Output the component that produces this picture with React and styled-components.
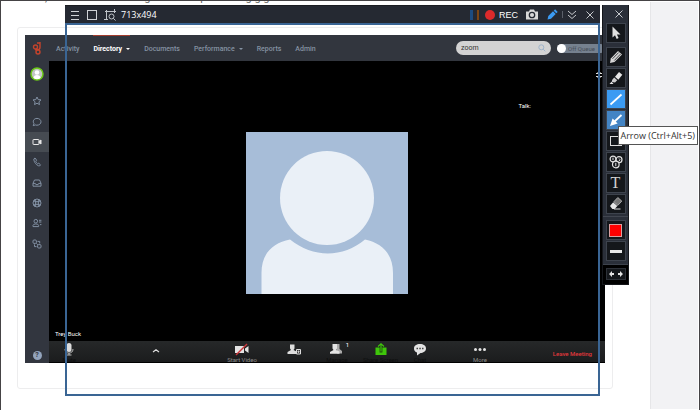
import React from "react"
import styled, { createGlobalStyle } from "styled-components"

const NAV = [
  { label: "Activity" },
  { label: "Directory", active: true, menu: true },
  { label: "Documents" },
  { label: "Performance", menu: true },
  { label: "Reports" },
  { label: "Admin" },
]

const SIDE = [
  {
    name: "Favorites",
    art: <path d="M5 1l1.200 2.600 2.800.3-2.100 1.900.6 2.800L5 7.200 2.500 8.600l.6-2.800L1 3.900l2.800-.3z" />,
  },
  {
    name: "Chat",
    art: <path d="M1.200 8.700l.8-2C.3 4.400 1.700 1.400 5 1.400c2.300 0 4 1.500 4 3.400S7.300 8.200 5 8.200c-.7 0-1.200-.1-1.700-.3z" />,
  },
  {
    name: "Video",
    active: true,
    art: (
      <>
        <rect x="1" y="2.500" width="6" height="5" rx=".5" />
        <path d="M7 4.500l2-1.500v4l-2-1.500z" fill="currentColor" />
      </>
    ),
  },
  {
    name: "Phone",
    art: <path d="M3 1L1.900 1.900c-.3 3 2.700 7 5.600 7.100L8.500 7.800 6.700 6.200l-.9.8C4.700 6.300 4 5.200 3.700 4.200l.9-1z" />,
  },
  {
    name: "Inbox",
    art: <path d="M1 5.300L2.500 2h5L9 5.300V8.200H1zM1 5.400h2.300l.6 1.200h2.200l.6-1.200H9" />,
  },
  {
    name: "Support",
    art: (
      <>
        <circle cx="5" cy="5" r="4" />
        <circle cx="5" cy="5" r="1.500" />
        <path d="M2.200 2.200L4 4M7.800 2.200L6 4M2.200 7.800L4 6M7.800 7.800L6 6" strokeWidth="1.800" />
      </>
    ),
  },
  {
    name: "Contacts",
    art: (
      <>
        <circle cx="3.800" cy="3.200" r="1.800" />
        <path d="M1 8.600V7.300c0-1.800 5.600-1.800 5.600 0v1.300zM7 2.300h2.400M7 4h2.400M8 6.600h1.400" />
      </>
    ),
  },
  {
    name: "Integrations",
    art: (
      <>
        <rect x="1" y="1" width="3.400" height="3.400" rx="1" />
        <rect x="5.600" y="5.600" width="3.400" height="3.400" rx="1" />
        <path d="M5.500 2.400h2.200v2M2.500 5.400v2.200h2M4.300 4.300l1.500 1.500" />
      </>
    ),
  },
]

const DRAW_TOOLS = [
  {
    name: "Pencil",
    art: (
      <>
        <path d="M2 14l.8-4.500L10 2l4 3.600L6.500 13z" fill="#d6d6d6" />
        <path d="M4.500 9.800l6.200-6.300M6.300 11.500l6.200-6.400" stroke="#17191d" strokeWidth=".8" />
      </>
    ),
  },
  {
    name: "Highlighter",
    art: (
      <>
        <path d="M7 6.800l4-4.800 3.300 2.800-4 5z" fill="#e6e6e6" />
        <path d="M6.200 7.600l3 2.700-2.200 2.200-3.200-.4.300-2z" fill="#cfcfcf" />
        <path d="M1.500 14l2-2.200 2 2.200z" fill="#e6e6e6" />
      </>
    ),
  },
  {
    name: "Line",
    tone: "#3b9bf3",
    art: <path d="M2.500 13.500L13.500 3.500" stroke="#fff" strokeWidth="1.700" />,
  },
  {
    name: "Arrow",
    tone: "#4384c4",
    tip: "Arrow (Ctrl+Alt+5)",
    art: (
      <>
        <path d="M13.500 3L6 10" stroke="#fff" strokeWidth="1.800" />
        <path d="M2 14l2.600-7.500 5 5z" fill="#fff" />
      </>
    ),
  },
  {
    name: "Rectangle",
    art: <rect x="2.500" y="3.500" width="11" height="9" stroke="#ddd" fill="none" />,
  },
  {
    name: "Numbering",
    art: (
      <g fill="#17191d" stroke="#e2e2e2" strokeWidth="1.200">
        <circle cx="11" cy="5.700" r="3" />
        <circle cx="5" cy="5" r="2.900" />
        <circle cx="7.800" cy="10.500" r="3.300" />
        <path d="M5 3.600v2.500M7.800 8.800v3.400M11 4.500l1 1.200-1 1.300" fill="none" strokeWidth="1" />
      </g>
    ),
  },
  { name: "Text", glyph: "T" },
  {
    name: "Eraser",
    art: (
      <>
        <path d="M2 10l3.200-3.700L9.300 10l-2.600 3H4.400z" fill="#e8e8e8" />
        <path d="M5.800 5.700L9.800 1.500l4 3.600L9.800 9.400z" fill="#777" stroke="#ccc" strokeWidth=".7" />
        <path d="M6 13h6.500" stroke="#ddd" />
      </>
    ),
  },
]

const CALL = [
  {
    name: "Mute",
    dim: true,
    offset: true,
    art: (
      <>
        <rect x="5.500" y="0" width="5" height="9" rx="2.500" fill="#ddd" />
        <path d="M4 6c0 5.500 8 5.500 8 0M8 10v2M5.500 12h5" stroke="#bbb" fill="none" />
      </>
    ),
  },
  { name: "", aria: "Audio options", art: <path d="M5 9L8 6.800 11 9" fill="none" stroke="#ddd" strokeWidth="1.200" /> },
  {
    name: "Start Video",
    art: (
      <>
        <path d="M1 3h9v7H1zM11 5.500L14.500 3v7L11 7.500z" fill="#e3e3e3" />
        <path d="M2 12L13 1" stroke="#c8363b" strokeWidth="1.400" />
      </>
    ),
  },
  {
    name: "",
    aria: "Invite",
    art: (
      <>
        <path d="M4 1.500h4.500v4l-1 1.500L10.500 8.500V11h-9V9L5 7 4 5.500z" fill="#ddd" />
        <path d="M10.500 6.500h4V11h-4z" fill="#333" stroke="#ddd" />
        <path d="M12.500 7.500v2.500M11.300 8.700h2.400" stroke="#ddd" strokeWidth=".8" />
      </>
    ),
  },
  {
    name: "Manage",
    dim: true,
    badge: "1",
    art: (
      <>
        <path d="M6.500 1h4v5L13 8v2.500H8z" fill="#aaa" />
        <path d="M3.500 1H8v4.500L7 7l3.500 1.500v2.300H1V9l3.500-2-1-1.500z" fill="#e3e3e3" />
      </>
    ),
  },
  {
    name: "Share Screen",
    dim: true,
    art: (
      <>
        <path d="M2.500 4.500h11v7.500h-11z" fill="#3fc60b" />
        <path d="M8 9.500V3.500" stroke="#1d4d0c" strokeWidth="2.800" />
        <path d="M8 8.500V1M5 3.500L8 .8l3 2.700" fill="none" stroke="#3fc60b" strokeWidth="1.100" />
      </>
    ),
  },
  {
    name: "Chat",
    dim: true,
    art: (
      <>
        <path d="M8 1c3.500 0 6 1.700 6 4.500S11 10 8.500 10L5 12.500V9.600C3.200 9 2 7.500 2 5.500 2 2.700 4.500 1 8 1z" fill="#e3e3e3" />
        <path d="M4.500 5.500h1.500M7.300 5.500h1.500M10 5.500h1.500" stroke="#444" strokeWidth="1.400" />
      </>
    ),
  },
  {
    name: "More",
    art: (
      <g fill="#e3e3e3">
        <circle cx="3.500" cy="6.500" r="1.500" />
        <circle cx="8" cy="6.500" r="1.500" />
        <circle cx="12.500" cy="6.500" r="1.500" />
      </g>
    ),
  },
]

export default function App() {
  return (
    <>
      <GlobalStyle />
      <Page>
        <Article>
          <Clipped aria-hidden="true">
            <span>,</span>
            <span>g</span>
            <span>p</span>
            <span>g g g</span>
          </Clipped>
          <Card>
            <MeetingApp />
          </Card>
        </Article>
        <Gutter />
        <Recorder />
      </Page>
    </>
  )
}

const MeetingApp = () => (
  <Shell>
    <Sidebar>
      <Logo viewBox="0 0 10 14" aria-label="Home">
        <circle cx="3.500" cy="6" r="2" />
        <circle cx="6" cy="11" r="2" />
        <path d="M8 1v5.500c0 1.600-1.500 2.300-3 2.300H3M5 2h3" />
      </Logo>
      <Profile aria-label="Profile">
        <svg viewBox="0 0 14 14" width="14" height="14">
          <circle cx="7" cy="7" r="6" fill="#c3c5c4" stroke="#6cc917" strokeWidth="1.500" />
          <circle cx="7" cy="5.500" r="2.300" fill="#fff" />
          <path d="M3.500 11c0-4 7-4 7 0-2 1.600-5 1.600-7 0z" fill="#fff" />
        </svg>
      </Profile>
      <SideList>
        {SIDE.map(item => (
          <SideButton key={item.name} aria-label={item.name} $active={item.active}>
            <svg viewBox="0 0 10 10" width="10" height="10">
              {item.art}
            </svg>
          </SideButton>
        ))}
      </SideList>
      <Help aria-label="Help">?</Help>
    </Sidebar>
    <Workspace>
      <Header>
        <Nav>
          {NAV.map(item => (
            <NavLink key={item.label} href="#" $active={item.active}>
              {item.label}
              {item.menu && <Caret />}
            </NavLink>
          ))}
        </Nav>
        <Search>
          <input aria-label="Search" defaultValue="zoom" />
          <svg viewBox="0 0 8 8" width="8" height="8">
            <circle cx="3.300" cy="3.300" r="2.500" />
            <path d="M5.200 5.200L7.300 7.300" />
          </svg>
        </Search>
        <Queue>
          <input type="checkbox" />
          Off Queue
        </Queue>
      </Header>
      <Stage>
        <StageTop>
          <Expand aria-label="Full screen">
            <svg viewBox="0 0 8 8" width="8" height="8">
              <path d="M1 2.500h2V1M5 1v1.500h2M1 5.500h2V7M5 7V5.500h2" />
            </svg>
          </Expand>
          <Talk>Talk:</Talk>
        </StageTop>
        <Avatar viewBox="0 0 162 162" role="img" aria-label="Participant">
          <rect width="162" height="162" fill="#a7bdd8" />
          <circle cx="81" cy="66" r="47" fill="#eaf0f7" />
          <path
            d="M15.500 162V141C15.500 121 27 111 44 107.500C67 126 97 126 119 107.500C136 111 147 122 147 141V162Z"
            fill="#eaf0f7"
          />
        </Avatar>
        <Speaker>Trey Buck</Speaker>
      </Stage>
      <CallBar>
        {CALL.map(item => (
          <CallButton key={item.name || item.aria} aria-label={item.aria} $offset={item.offset}>
            <svg viewBox="0 0 16 13" width="16" height="13">
              {item.art}
            </svg>
            {item.badge && <Badge>{item.badge}</Badge>}
            <CallLabel $dim={item.dim}>{item.name}</CallLabel>
          </CallButton>
        ))}
        <Leave>Leave Meeting</Leave>
      </CallBar>
    </Workspace>
  </Shell>
)

const Recorder = () => (
  <Overlay>
    <Capture>
      <Titlebar>
        <BarButton aria-label="Menu" $width={17}>
          <svg viewBox="0 0 10 10" width="10" height="10" stroke="#cfd2d6">
            <path d="M1 1.500h8M1 5.500h8M1 9.500h8" />
          </svg>
        </BarButton>
        <BarButton aria-label="Rectangle area" $width={18}>
          <svg viewBox="0 0 10 10" width="10" height="10" stroke="#cfd2d6">
            <rect x=".5" y=".5" width="9" height="9" fill="none" />
          </svg>
        </BarButton>
        <BarButton aria-label="Around mouse" $width={18}>
          <svg viewBox="0 0 12 12" width="12" height="12" stroke="#bfc3c8" fill="none">
            <path d="M2.500 1v9.500M1 2.500h8M10.500 0v4M8.500 2.500h3.500M0 10.500h4" />
            <circle cx="7.500" cy="7.500" r="2.500" />
            <path d="M9.300 9.300l2.200 2.200" />
          </svg>
        </BarButton>
        <Size>713x494</Size>
        <Pause aria-label="Pause">
          <svg viewBox="0 0 12 12" width="12" height="12">
            <rect x="1" y="1" width="3" height="10" fill="#1d4c80" />
            <rect x="8" y="1" width="2" height="10" fill="#7d4512" />
          </svg>
        </Pause>
        <Rec>
          <i />
          REC
        </Rec>
        <BarButton aria-label="Screenshot" $width={20}>
          <svg viewBox="0 0 12 11" width="12" height="11">
            <path d="M0 2.500h3L4 .5h4l1 2h3V10.500H0z" fill="#d8d8d8" />
            <circle cx="6" cy="6" r="2.700" fill="none" stroke="#252932" strokeWidth="1.300" />
          </svg>
        </BarButton>
        <BarButton aria-label="Draw" $width={20}>
          <svg viewBox="0 0 11 11" width="11" height="11">
            <path d="M.5 10.500l.8-3.500L6 2.300l2.700 2.700L4 9.700zM6.700 1.700L8.100.3l2.600 2.600-1.400 1.400z" fill="#3b9bf3" />
          </svg>
        </BarButton>
        <Rule />
        <BarButton aria-label="Collapse" $width={18}>
          <svg viewBox="0 0 10 10" width="10" height="10" stroke="#c5c8cc" fill="none">
            <path d="M1 1l4 3.500L9 1M1 5l4 3.500L9 5" />
          </svg>
        </BarButton>
        <BarButton aria-label="Close" $width={18}>
          <Cross />
        </BarButton>
      </Titlebar>
      <Frame />
    </Capture>
    <Palette>
      <PaletteClose aria-label="Close tools">
        <Cross />
      </PaletteClose>
      <Tool aria-label="Select">
        <svg viewBox="0 0 16 16" width="16" height="16">
          <path d="M4.500 1.500v11L7 10.300l1.700 3.700 1.900-.9-1.700-3.500h3.600z" fill="#e0e0e0" />
        </svg>
      </Tool>
      <Tools>
        {DRAW_TOOLS.map(tool => (
          <ToolSlot key={tool.name}>
            <Tool aria-label={tool.name} $tone={tool.tone}>
              {tool.glyph || (
                <svg viewBox="0 0 16 16" width="16" height="16" fill="none">
                  {tool.art}
                </svg>
              )}
            </Tool>
            {tool.tip && <Tip role="tooltip">{tool.tip}</Tip>}
          </ToolSlot>
        ))}
      </Tools>
      <Tools $ruled>
        <Tool aria-label="Color">
          <Swatch />
        </Tool>
        <Tool aria-label="Line width">
          <Stroke />
        </Tool>
      </Tools>
      <PaletteFoot>
        <Flip aria-label="Flip">
          <svg viewBox="0 0 16 8" width="16" height="8" fill="#e3e3e3">
            <path d="M1 4l3-3v2h2v2H4v2zM15 4l-3-3v2h-2v2h2v2z" />
          </svg>
        </Flip>
      </PaletteFoot>
    </Palette>
  </Overlay>
)

const Cross = () => (
  <svg viewBox="0 0 8 8" width="8" height="8" stroke="#c5c8cc">
    <path d="M.5.5l7 7M7.500.5l-7 7" />
  </svg>
)

const GlobalStyle = createGlobalStyle`
  * {
    box-sizing: border-box;
  }

  body {
    margin: 0;
    font-family: Roboto, sans-serif;
    font-size: 7px;
  }

  button,
  input {
    font: inherit;
    color: inherit;
    margin: 0;
    padding: 0;
    border: 0;
    background: none;
  }

  svg {
    display: block;
    flex: none;
  }
`

const Page = styled.div`
  position: relative;
  display: grid;
  grid-template-columns: 1fr 49px;
  min-height: 100vh;
  border: 1px solid #454345;
  background: #fff;
`

const Article = styled.main`
  padding: 0 37px 21px 16px;
`

/* last line of the scrolled-away paragraph, only its descenders show */
const Clipped = styled.div`
  display: flex;
  gap: 50px;
  height: 26px;
  margin: -9px 0 9px;
  padding-left: 28px;
  clip-path: inset(9px 0 0 0);
  color: #666;
  font-size: 11px;
  line-height: 12px;

  span:first-child {
    margin-right: 47px;
  }

  span:last-child {
    margin-left: -11px;
  }
`

const Gutter = styled.aside`
  background: #f2f2f4;
  border-left: 1px solid #e6e6e8;
  margin: 1px 1px 1px 0;
`

const Card = styled.section`
  padding: 7px 7px 25px;
  border: 1px solid #ededee;
  border-radius: 3px;
`

const Shell = styled.div`
  display: flex;
  color: #fff;
  background: #000;
`

const Sidebar = styled.aside`
  display: flex;
  flex-direction: column;
  align-items: center;
  width: 24px;
  background: #32363f;
`

const Logo = styled.svg`
  width: 10px;
  height: 14px;
  margin: 6px 0;
  fill: none;
  stroke: #c4432c;
  stroke-width: 1.4;
`

const Profile = styled.button`
  display: grid;
  place-items: center;
  height: 26px;
`

const SideList = styled.div`
  display: flex;
  flex-direction: column;
  align-self: stretch;
  height: 163px;
  margin-top: 4px;
`

const SideButton = styled.button`
  flex: 1;
  display: grid;
  place-items: center;
  color: ${p => (p.$active ? "#e8e8e8" : "#8290a3")};
  background: ${p => (p.$active ? "#464b52" : "none")};

  svg {
    fill: none;
    stroke: currentColor;
  }
`

const Help = styled.button`
  width: 9px;
  height: 9px;
  margin: auto 0 3px;
  border-radius: 50%;
  background: #93a4bd;
  color: #32363f;
  font-weight: 700;
  line-height: 9px;
`

const Workspace = styled.div`
  flex: 1;
  min-width: 0;
`

const Header = styled.header`
  display: flex;
  align-items: center;
  height: 26px;
  padding-left: 7px;
  background: #32363e;
`

const Nav = styled.nav`
  flex: 1;
  display: flex;
  gap: 14px;
  align-self: stretch;
`

const NavLink = styled.a`
  display: flex;
  align-items: center;
  gap: 4px;
  border-top: 1px solid ${p => (p.$active ? "#a33d2e" : "transparent")};
  color: ${p => (p.$active ? "#fff" : "#8593a3")};
  font-weight: ${p => (p.$active ? 700 : 500)};
  text-decoration: none;
`

const Caret = styled.span`
  border: 2px solid transparent;
  border-top-color: currentColor;
  border-bottom: 0;
`

const Search = styled.label`
  display: flex;
  align-items: center;
  width: 95px;
  height: 14px;
  padding: 0 5px 0 5px;
  border-radius: 7px;
  background: #d3d3d3;
  color: #333;

  input {
    flex: 1;
    min-width: 0;
  }

  svg {
    fill: none;
    stroke: #9fb4cb;
  }
`

const Queue = styled.label`
  display: flex;
  align-items: center;
  gap: 2px;
  width: 48px;
  height: 9px;
  margin-left: 6px;
  border-radius: 5px;
  background: #76818f;
  color: #464d58;
  font-size: 6px;

  input {
    appearance: none;
    width: 9px;
    height: 9px;
    border-radius: 50%;
    background: #fff;
  }
`

const Stage = styled.div`
  display: flex;
  flex-direction: column;
  align-items: center;
  min-height: 280px;
  background: #000;
`

const StageTop = styled.div`
  display: flex;
  flex-direction: column;
  align-self: stretch;
  align-items: flex-end;
  height: 71px;
  padding-top: 10px;
`

const Expand = styled.button`
  margin-right: 2px;

  svg {
    fill: none;
    stroke: #ddd;
  }
`

const Talk = styled.span`
  margin: 23px 74px 0 0;
  font-size: 6px;
  line-height: 8px;
`

const Avatar = styled.svg`
  width: 162px;
  height: 162px;
`

const Speaker = styled.span`
  align-self: flex-start;
  margin: auto 0 3px 6px;
  font-size: 6px;
  line-height: 8px;
`

const CallBar = styled.footer`
  display: grid;
  grid-template-columns: 52fr 110fr 62fr 42fr 44fr 43fr 36fr 84fr 83fr;
  height: 22px;
  overflow: hidden;
  border-bottom: 1px solid #000;
  background: linear-gradient(#262829, #1b1c1d);
`

const CallButton = styled.button`
  position: relative;
  display: flex;
  flex-direction: column;
  align-items: center;
  min-width: 0;
  padding-top: 2px;
  padding-right: ${p => (p.$offset ? "12px" : 0)};
  font-size: 6px;
`

const CallLabel = styled.span`
  line-height: 7px;
  white-space: nowrap;
  color: ${p => (p.$dim ? "#0d0e0e" : "#8c8c8c")};
`

const Badge = styled.span`
  position: absolute;
  top: 0;
  right: 10px;
`

const Leave = styled.button`
  padding: 2px 13px 0 0;
  color: #e2383c;
  font-size: 6px;
  font-weight: 500;
  text-align: right;
`

const Overlay = styled.div`
  position: absolute;
  top: 4px;
  right: 70px;
  bottom: 14px;
  left: 64px;
  display: flex;
  align-items: flex-start;
  gap: 2px;
`

const Capture = styled.section`
  flex: 1;
  align-self: stretch;
  display: flex;
  flex-direction: column;
`

const Titlebar = styled.div`
  display: flex;
  align-items: center;
  height: 18px;
  padding: 0 1px;
  border-top: 1px solid #1b1d22;
  background: #252932;
  color: #fff;
`

const BarButton = styled.button`
  display: grid;
  place-items: center;
  width: ${p => p.$width}px;
  height: 17px;
`

const Size = styled.span`
  flex: 1;
  padding-left: 2px;
  font: 9px/14px "Open Sans", sans-serif;
`

const Pause = styled(BarButton).attrs({ $width: 20 })``

const Rec = styled.button`
  display: flex;
  align-items: center;
  gap: 4px;
  margin-right: 4px;
  font: 9px/14px "Liberation Sans", sans-serif;

  i {
    width: 10px;
    height: 10px;
    border-radius: 50%;
    background: #dc2a2b;
  }
`

const Rule = styled.span`
  width: 1px;
  height: 7px;
  background: #5b606a;
`

const Frame = styled.div`
  flex: 1;
  border: 2px solid #3a6594;
`

const Palette = styled.aside`
  display: flex;
  flex-direction: column;
  align-items: center;
  width: 27px;
  border: 1px solid #14161a;
  border-top: 0;
  background: #2a2f39;
`

const PaletteClose = styled.button`
  display: grid;
  place-items: center;
  align-self: flex-end;
  width: 18px;
  height: 18px;
`

const Tool = styled.button`
  display: grid;
  place-items: center;
  width: 20px;
  height: 20px;
  border: 1px solid #3d434d;
  background: ${p => p.$tone || "#14171b"};
  color: #d2d2d2;
  font: 16px/16px "Liberation Serif", serif;
`

const Tools = styled.div`
  display: flex;
  flex-direction: column;
  align-items: center;
  gap: 1px;
  align-self: stretch;
  margin-top: ${p => (p.$ruled ? "2px" : "4px")};
  padding-top: ${p => (p.$ruled ? "3px" : 0)};
  border-top: ${p => (p.$ruled ? "1px solid #414650" : 0)};
`

const ToolSlot = styled.div`
  position: relative;
`

const Tip = styled.div`
  position: absolute;
  top: 16px;
  left: 12px;
  z-index: 1;
  padding: 0 2px;
  border: 1px solid #555;
  background: #fff;
  color: #333;
  font: 9px/17px "Open Sans", sans-serif;
  white-space: nowrap;
`

const Swatch = styled.span`
  width: 13px;
  height: 13px;
  border: 1px solid #d8a0a0;
  background: #f00;
`

const Stroke = styled.span`
  width: 12px;
  height: 3px;
  background: #e8e8e8;
`

const PaletteFoot = styled.div`
  align-self: stretch;
  display: grid;
  justify-items: center;
  margin-top: 3px;
  padding: 3px 0 4px;
  border-top: 1px solid #3d434d;
  background: #000;
`

const Flip = styled.button`
  display: grid;
  place-items: center;
  width: 20px;
  height: 12px;
  border: 1px solid #2c3037;
  background: #14171b;
`
